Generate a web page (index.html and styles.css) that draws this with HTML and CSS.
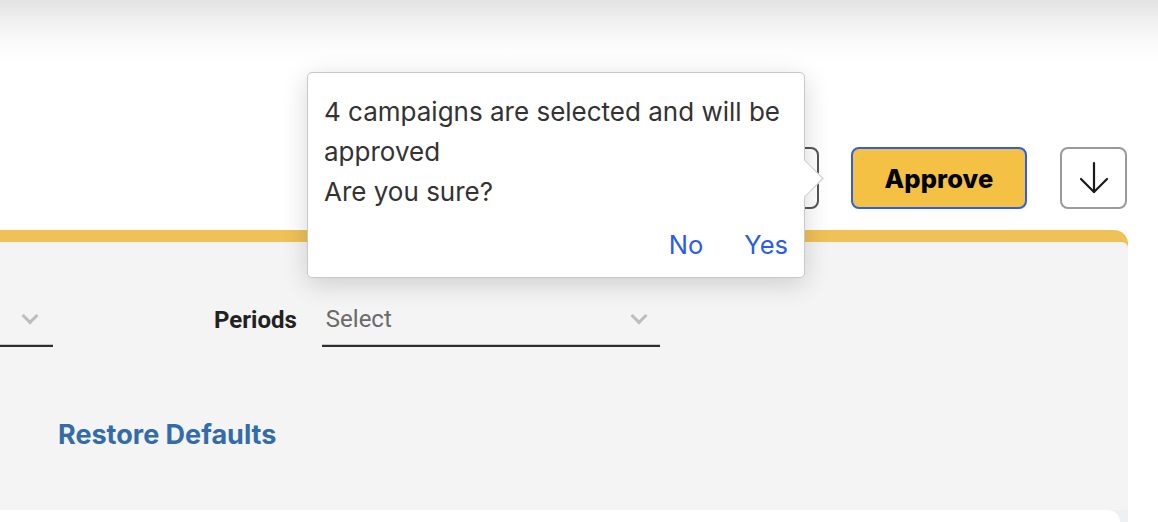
FILE: index.html
```html
<!DOCTYPE html>
<html lang="en">
<head>
<meta charset="utf-8">
<title>Approve campaigns</title>
<link rel="stylesheet" href="styles.css">
</head>
<body>
<div class="page">
  <div class="topshade"></div>
  <div class="toolbar">
    <button class="btn btn-outline btn-hidden" type="button">Reject</button>
    <button class="btn btn-approve" type="button">Approve</button>
    <button class="btn btn-icon" type="button" aria-label="Download">
      <svg width="32" height="34" viewBox="0 0 32 34" fill="none" stroke="#1a1a1a" stroke-width="2.2" stroke-linecap="round" stroke-linejoin="round">
        <path d="M16 2 V31"/>
        <path d="M3 18 L16 31 L29 18"/>
      </svg>
    </button>
  </div>

  <div class="panel">
    <div class="panel-body">
      <div class="filters">
        <div class="select select-partial">
          <span class="chev"></span>
        </div>
        <div class="label">Periods</div>
        <div class="select select-periods">
          <span class="placeholder">Select</span>
          <span class="chev"></span>
        </div>
      </div>
      <a class="restore" href="#">Restore Defaults</a>
    </div>
    <div class="panel-foot">
      <div class="card"></div>
    </div>
  </div>

  <div class="popover" role="dialog">
    <p class="pop-text">4 campaigns are selected and will be approved<br>Are you sure?</p>
    <div class="pop-actions">
      <a class="pop-btn" href="#">No</a>
      <a class="pop-btn" href="#">Yes</a>
    </div>
  </div>
</div>
</body>
</html>
```

FILE: styles.css
```css
* { box-sizing: border-box; }
html, body { margin: 0; padding: 0; }
body {
  background: #ffffff;
  font-family: Inter, "Noto Sans", Arial, sans-serif;
  width: 1158px;
  height: 522px;
  overflow: hidden;
}
.page {
  position: relative;
  width: 1158px;
  height: 522px;
  overflow: hidden;
}
.topshade {
  height: 64px;
  background: linear-gradient(180deg, #e3e3e3 0%, #f1f1f1 35%, #fbfbfb 70%, #ffffff 100%);
}
.toolbar {
  display: flex;
  justify-content: flex-end;
  align-items: center;
  margin-top: 83px;
  padding-right: 31px;
  height: 62px;
}
.btn {
  height: 62px;
  border-radius: 8px;
  font-family: Inter, "Noto Sans", Arial, sans-serif;
  cursor: pointer;
  display: flex;
  align-items: center;
  justify-content: center;
  padding: 0;
}
.btn-hidden {
  width: 170px;
  background: #ffffff;
  border: 2px solid #555555;
  color: #333;
  font-size: 22px;
}
.btn-approve {
  width: 176px;
  margin-left: 32px;
  background: #f4c144;
  border: 2px solid #2c5fe6;
  color: #000000;
  font-size: 25.5px;
  font-weight: 800;
  letter-spacing: 0.1px;
}
.btn-icon {
  width: 67px;
  margin-left: 33px;
  background: #ffffff;
  border: 2px solid #9a9a9a;
}

.panel {
  margin-top: 21px;
  width: 1128px;
  border-top: 12px solid #efc156;
  border-top-right-radius: 14px;
  background: #efc156;
}
.panel-body {
  background: #f4f4f4;
  border-top-right-radius: 6px;
  height: 268px;
  padding-top: 65px;
}
.filters {
  display: flex;
  align-items: flex-start;
}
.select {
  position: relative;
  height: 40px;
  border-bottom: 2px solid #2e2e2e;
  box-shadow: inset 0 -1px 0 #c6c6c6;
  padding: 0 4px 14px;
}
.select-partial { width: 53px; }
.select-periods { width: 338px; margin-left: 25px; }
.placeholder {
  font-family: Roboto, Arial, sans-serif;
  font-size: 24px;
  line-height: 24px;
  color: #6a6a6a;
}
.chev {
  position: absolute;
  top: 3px;
  right: 15px;
  width: 12px;
  height: 12px;
  border-right: 3px solid #bdbdbd;
  border-bottom: 3px solid #bdbdbd;
  transform: rotate(45deg);
}
.select-partial .chev { right: 17px; }
.label {
  margin-left: 161px;
  font-family: Roboto, Arial, sans-serif;
  font-weight: 700;
  font-size: 24px;
  line-height: 24px;
  margin-top: 1px;
  color: #222222;
}
.restore {
  display: inline-block;
  margin-top: 73px;
  margin-left: 58px;
  font-size: 27px;
  line-height: 30px;
  font-weight: 700;
  color: #336ca8;
  text-decoration: none;
}
.panel-foot {
  background: #eff0f3;
  height: 20px;
}
.card {
  width: 1120px;
  height: 20px;
  background: #ffffff;
  border-top-right-radius: 12px;
}

.popover {
  position: absolute;
  left: 307px;
  top: 72px;
  width: 498px;
  height: 206px;
  background: #ffffff;
  border: 1px solid #c9c9c9;
  border-radius: 5px;
  box-shadow: 0 6px 26px rgba(0, 0, 0, 0.16);
  padding: 19px 16px 13px 16px;
  color: #333333;
}
.popover::after {
  content: "";
  position: absolute;
  left: calc(100% - 13px);
  top: 92px;
  width: 26px;
  height: 26px;
  background: #ffffff;
  border-top: 1px solid #c9c9c9;
  border-right: 1px solid #c9c9c9;
  transform: rotate(45deg);
}
.pop-text {
  margin: 0;
  font-size: 26px;
  line-height: 40px;
  color: #333333;
}
.pop-actions {
  display: flex;
  justify-content: flex-end;
  gap: 41px;
  margin-top: 13px;
}
.pop-btn {
  font-size: 25.5px;
  line-height: 40px;
  color: #2a5bea;
  text-decoration: none;
}
```
